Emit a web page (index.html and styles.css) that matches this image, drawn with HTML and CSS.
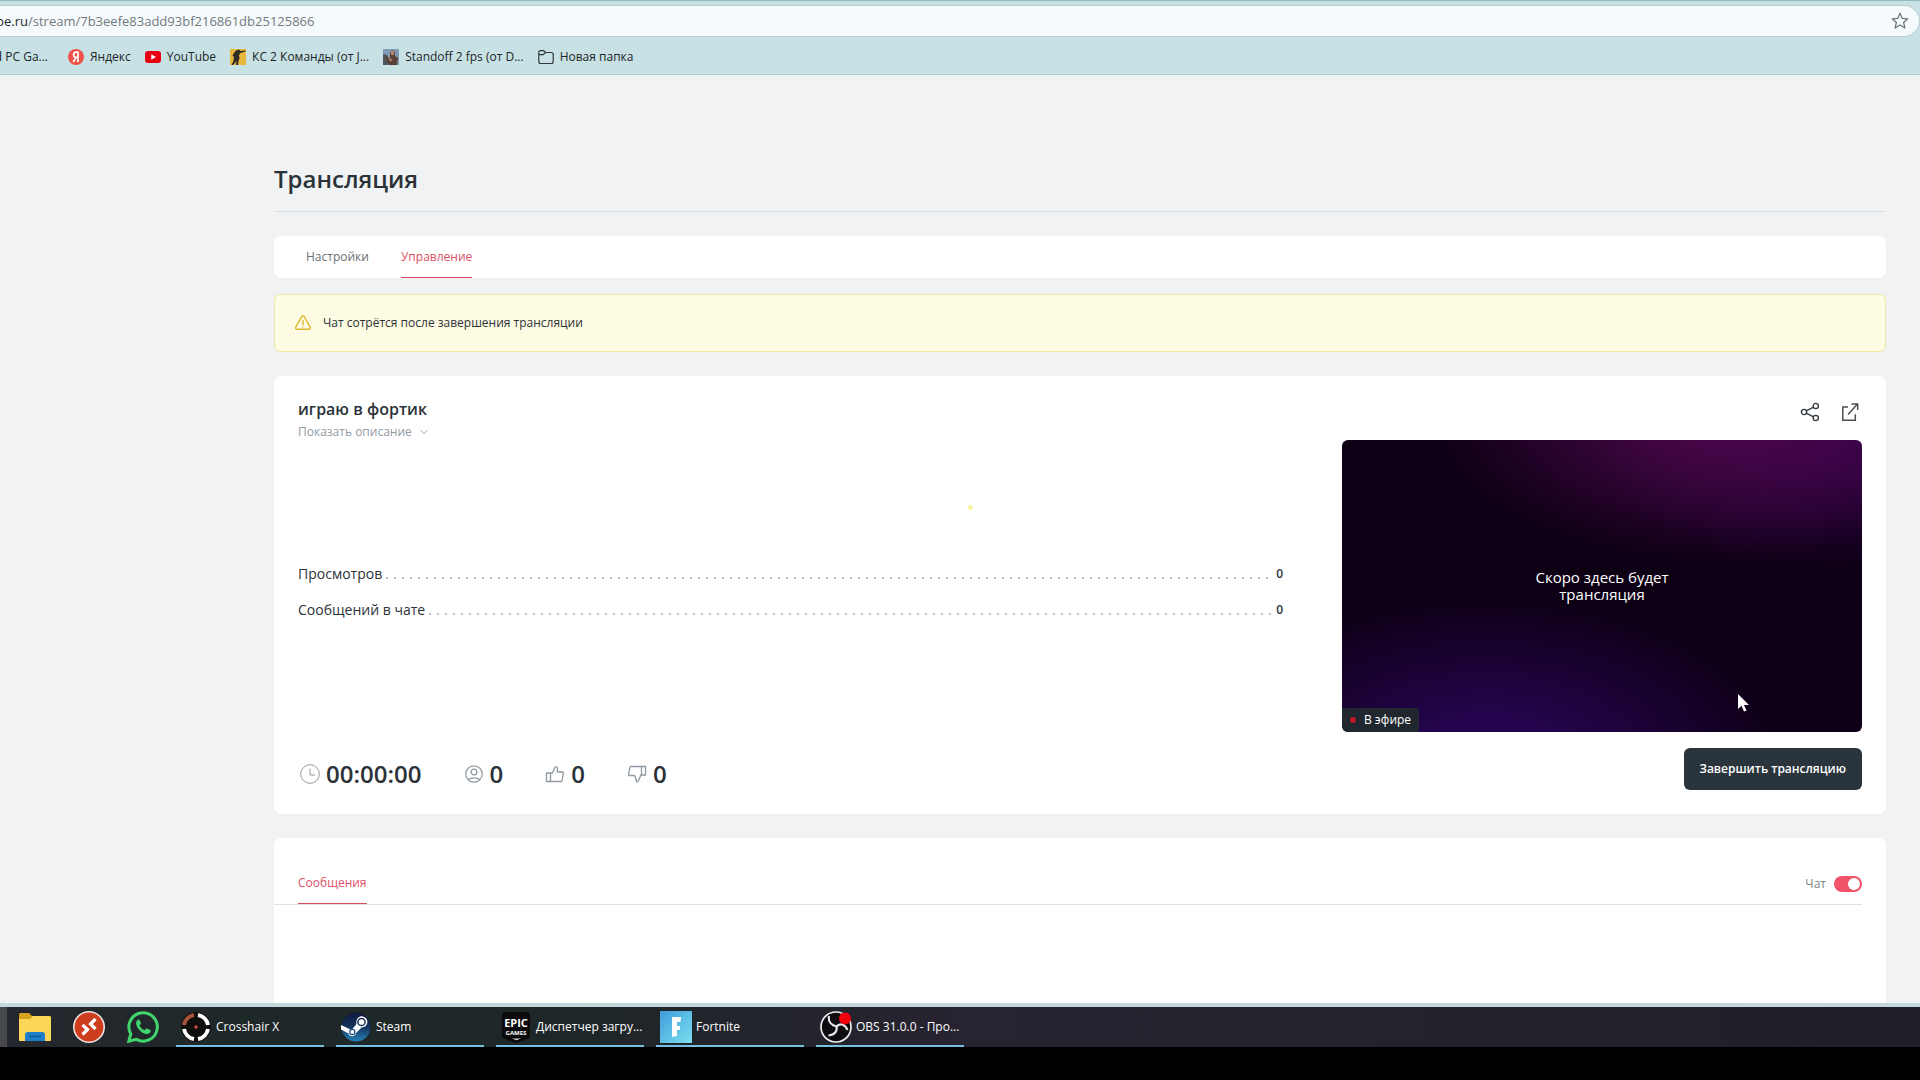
FILE: index.html
```html
<!DOCTYPE html>
<html lang="ru">
<head>
<meta charset="utf-8">
<title>Трансляция</title>
<link rel="stylesheet" href="styles.css">
</head>
<body>
<header class="browser">
  <div class="address">
    <label class="address-host" for="url">be.ru</label>
    <input class="address-input" id="url" type="text" value="/stream/7b3eefe83add93bf216861db25125866">
    <button class="icon-button star" aria-label="Добавить в закладки">
      <svg width="18" height="18" viewBox="0 0 18 18" fill="none" stroke="#687277" stroke-width="1.2" stroke-linejoin="round"><path d="M9 1.2l2.2 5.1 5.6.5-4.200 3.700 1.300 5.500L9 13.100 4.100 16l1.300-5.500L1.200 6.800l5.600-.5z"/></svg>
    </button>
  </div>
  <nav class="bookmarks">
    <a class="bookmark bookmark-cut" href="#">d PC Ga...</a>
    <a class="bookmark" href="#">
      <svg width="16" height="16" viewBox="0 0 16 16"><circle cx="8" cy="8" r="8" fill="#ee5148"/><path d="M10 13V3.200H8.300C6.500 3.200 5.600 4.300 5.600 5.700c0 1.500.8 2.500 2.400 2.600h2M8 8.400L5.400 13" fill="none" stroke="#fff" stroke-width="1.700"/></svg>
      <span>Яндекс</span></a>
    <a class="bookmark" href="#">
      <svg width="16" height="16" viewBox="0 0 16 16"><rect y="2" width="16" height="12" rx="3" fill="#e60012"/><path d="M6.300 5.300v5.400L11 8z" fill="#fff"/></svg>
      <span>YouTube</span></a>
    <a class="bookmark" href="#">
      <svg width="16" height="16" viewBox="0 0 16 16"><rect width="16" height="16" fill="#e5b83c"/><path d="M6 1.500l3-1 1.500 1.500 5-.5v1l-5 1.500-1.500 2 .5 3L8.500 12 8 16H6l.5-4.500L5 14l-2 2H1.500l2-4L4 8 2.500 6.500 4 4z" fill="#2e2c25"/></svg>
      <span>КС 2 Команды (от J...</span></a>
    <a class="bookmark" href="#">
      <svg width="16" height="16" viewBox="0 0 16 16"><rect width="16" height="16" fill="#7f9ab2"/><path d="M0 5l4 1 2 4-2 6H0z" fill="#4c5560"/><path d="M5 16L2 8l2-1 3 3V4l2-3 3 2v4l3 2-1 7z" fill="#5a4238"/><path d="M8 2h3v4H8zM5 9l4 1-1 3z" fill="#b08a75"/></svg>
      <span>Standoff 2 fps (от D...</span></a>
    <a class="bookmark" href="#">
      <svg width="16" height="16" viewBox="0 0 16 16" fill="none" stroke="#30383b" stroke-width="1.200"><path d="M.8 12.500v-9C.8 2.400 1.600 1.600 2.700 1.600h3l1.800 1.900h5.700c1.100 0 2 .9 2 2v7c0 1.100-.9 2-2 2H2.700c-1.100 0-1.900-.9-1.900-2zM.8 5.700h4.400l2.300-2.200"/></svg>
      <span>Новая папка</span></a>
  </nav>
</header>

<main class="page">
  <h1 class="page-title">Трансляция</h1>
  <nav class="tabs">
    <a class="tab" href="#">Настройки</a>
    <a class="tab tab-active" href="#">Управление</a>
  </nav>
  <div class="alert" role="alert">
    <svg width="18" height="18" viewBox="0 0 18 18" fill="none" stroke="#e0b62c" stroke-width="1.400" stroke-linejoin="round" stroke-linecap="round"><path d="M7.800 2.600c.5-.9 1.900-.9 2.400 0l6 10.600c.5.900-.1 2-1.200 2H3c-1.100 0-1.700-1.100-1.200-2zM9 6.500v4M9 12.600v.2"/></svg>
    <span>Чат сотрётся после завершения трансляции</span>
  </div>

  <section class="card stream">
    <div class="stream-head">
      <div>
        <h2 class="stream-title">играю в фортик</h2>
        <button class="more">Показать описание
          <svg width="8" height="6" viewBox="0 0 8 6" fill="none" stroke="#9aa5ae"><path d="M.5 1L4 4.500 7.500 1"/></svg>
        </button>
      </div>
      <div class="stream-actions">
        <button class="icon-button" aria-label="Поделиться">
          <svg width="20" height="20" viewBox="0 0 20 20" fill="none" stroke="#343c42" stroke-width="1.400"><circle cx="4" cy="10" r="2.600"/><circle cx="15.800" cy="4" r="2.600"/><circle cx="15.800" cy="16" r="2.600"/><path d="M6.300 8.800L13.500 5.200M6.300 11.200l7.200 3.600"/></svg>
        </button>
        <button class="icon-button" aria-label="Открыть в новом окне">
          <svg width="20" height="20" viewBox="0 0 20 20" fill="none" stroke="#4b5257" stroke-width="1.500"><path d="M8 5H2.800v13.200h12.500v-6M8 12.500L17.500 2M11.500 2H17.700v6"/></svg>
        </button>
      </div>
    </div>
    <div class="stream-body">
      <dl class="metrics">
        <div class="metric"><dt>Просмотров</dt><dd>0</dd></div>
        <div class="metric"><dt>Сообщений в чате</dt><dd>0</dd></div>
      </dl>
      <div class="player">
        <p class="player-text">Скоро здесь будет<br>трансляция</p>
        <span class="live">В эфире</span>
      </div>
    </div>
    <div class="stream-foot">
      <ul class="stats">
        <li class="stat">
          <svg width="20" height="20" viewBox="0 0 20 20" fill="none" stroke="#8e99a2"><circle cx="10" cy="10" r="9.300"/><path d="M10 4.500V11h5"/></svg>
          00:00:00</li>
        <li class="stat">
          <svg width="20" height="20" viewBox="0 0 20 20" fill="none" stroke="#8e99a2" stroke-width="1.200"><circle cx="11" cy="10" r="8.200"/><circle cx="11" cy="8" r="2.900"/><path d="M5.200 15.500c3-2.300 8.600-2.300 11.600 0"/></svg>
          0</li>
        <li class="stat">
          <svg width="20" height="20" viewBox="0 0 20 20" fill="none" stroke="#8e99a2" stroke-width="1.300" stroke-linejoin="round"><path d="M1.500 9h4v8.500h-4zM5.500 9h2L10 3c1.300-.6 2.500.2 2.400 1.500V8h5.200c.6 0 .9.400.8 1l-1.300 7.500c-.1.700-.5 1-1.100 1H5.500"/></svg>
          0</li>
        <li class="stat">
          <svg width="20" height="20" viewBox="0 0 20 20" fill="none" stroke="#8e99a2" stroke-width="1.300" stroke-linejoin="round"><path d="M18.500 2.500h-4V11h4zM14.500 2.500H4c-.6 0-1 .3-1.100 1L1.600 10.500c-.1.600.2 1 .8 1h4.900c.6 0 .7.400.8 1l1.600 5.200c1 .2 1.500-.4 1.900-1.200l2.300-5.500h.6"/></svg>
          0</li>
      </ul>
      <button class="finish">Завершить трансляцию</button>
    </div>
    <span class="spark"></span>
  </section>

  <section class="card chat">
    <div class="chat-head">
      <a class="tab tab-active" href="#">Сообщения</a>
      <label class="switch">Чат <input class="switch-input" type="checkbox" checked></label>
    </div>
  </section>
</main>

<footer class="taskbar">
  <button class="pin" aria-label="Проводник">
    <svg width="32" height="32" viewBox="0 0 32 32"><path d="M0 4c0-1.500.8-2 2-2h8l3 3h17c1.500 0 2 .8 2 2v21H0z" fill="#d9a21c"/><path d="M0 8h11l3-3h16c1.500 0 2 .8 2 2v22c0 .6-.4 1-1 1H1c-.6 0-1-.4-1-1z" fill="#fbd657"/><path d="M6 30v-6c0-2 1-3 3-3h14c2 0 3 1 3 3v6z" fill="#1d7fc9"/><path d="M10 25.500h12" stroke="#0e5c9d" stroke-width="1.500"/></svg>
  </button>
  <button class="pin" aria-label="Удалённый рабочий стол">
    <svg width="32" height="32" viewBox="0 0 32 32"><circle cx="16" cy="16" r="15.200" fill="#cf3d1f" stroke="#ece5e2" stroke-width="1.600"/><path d="M9.500 14l5 4.500-5 5M22.500 8l-5 5 5 5" fill="none" stroke="#fff" stroke-width="3.200"/></svg>
  </button>
  <button class="pin" aria-label="WhatsApp">
    <svg width="32" height="32" viewBox="0 0 32 32"><path d="M1.800 30.200l2-7.200A14.200 14.200 0 1 1 9.300 28.400z" fill="none" stroke="#42d46c" stroke-width="3"/><path d="M11.500 8.500c-2 .8-2.900 3-2.200 5.200 1.500 4.500 5 8 9.500 9.300 2.300.6 4.500-.8 4.900-2.900.1-.5 0-.8-.4-1l-3.300-1.600c-.4-.2-.8-.1-1 .2l-1.300 1.600c-2.400-1-4.200-2.800-5.200-4.900l1.300-1.600c.2-.3.300-.6.200-.9l-1.400-3c-.2-.4-.6-.6-1.100-.4z" fill="#42d46c"/></svg>
  </button>
  <button class="task">
    <svg width="32" height="32" viewBox="0 0 32 32"><circle cx="16" cy="16" r="15" fill="#100d0d"/><g fill="none" stroke-width="4"><path d="M18 4a12.300 12.300 0 0 1 10 10M28 18a12.300 12.300 0 0 1-10 10M14 28A12.300 12.300 0 0 1 4 18" stroke="#fff"/><path d="M4 14A12.300 12.300 0 0 1 14 4" stroke="#a8553b"/></g><circle cx="16" cy="16" r="1.800" fill="#c94a40"/></svg>
    <span>Crosshair X</span></button>
  <button class="task">
    <svg width="32" height="32" viewBox="0 0 32 32"><defs><linearGradient id="steam" x2="0" y2="1"><stop offset="0" stop-color="#11183f"/><stop offset=".5" stop-color="#14335c"/><stop offset="1" stop-color="#2583b8"/></linearGradient></defs><circle cx="16" cy="16" r="14.500" fill="url(#steam)"/><path d="M1 14l10.500 5L16.500 13c-1-5 3-8.500 6.500-7.500 7 2 5 11-1.500 11L16 22c-.5 4-6.500 4.500-7.500.500L1 18.500z" fill="#fff"/><circle cx="21.500" cy="11" r="3.600" fill="none" stroke="#1a3157" stroke-width="1.500"/><circle cx="12.300" cy="21" r="2.600" fill="none" stroke="#1a4a78" stroke-width="1.200"/></svg>
    <span>Steam</span></button>
  <button class="task">
    <svg class="epic" width="32" height="32" viewBox="0 0 32 32"><path d="M5 1h22c1.700 0 3 1 3 3v21c0 1.500-.5 2-2 2.800L16.500 32 4 27.800C2.500 27 2 26.500 2 25V4c0-2 1.300-3 3-3z" fill="#0a0a0b"/><path d="M12 27.500h9l-4.500 1.800z" fill="#ddd"/><text class="epic-name" x="16" y="16" text-anchor="middle">EPIC</text><text class="epic-games" x="16" y="24" text-anchor="middle">GAMES</text></svg>
    <span>Диспетчер загру...</span></button>
  <button class="task">
    <svg width="32" height="32" viewBox="0 0 32 32"><defs><linearGradient id="fort" x2="1" y2="1"><stop offset="0" stop-color="#3f9cdc"/><stop offset="1" stop-color="#7be0ee"/></linearGradient></defs><rect width="32" height="32" fill="url(#fort)"/><path d="M12 6h9l-.5 5H17v4h3v4h-3v6l-5 1z" fill="#fff"/></svg>
    <span>Fortnite</span></button>
  <button class="task">
    <svg width="32" height="32" viewBox="0 0 32 32"><circle cx="16" cy="16" r="15" fill="#0e0c10" stroke="#eee" stroke-width="1.700"/><path d="M9 5c-1 5 2 9 7.500 10.500M17 15c4-3 8-1.500 10.500 4M16.500 15c1 5-1.500 9-8 9.500" fill="none" stroke="#e9e9ec" stroke-width="2.200"/><circle cx="25" cy="7.500" r="6" fill="#f0000c"/></svg>
    <span>OBS 31.0.0 - Про...</span></button>
</footer>

<svg class="cursor" width="14" height="20" viewBox="0 0 14 20"><path d="M1 1v15l3.500-3.300L7 18.500l2.500-1-2.500-5.500h5z" fill="#fff"/></svg>
</body>
</html>
```
FILE: styles.css
```css
* {
  box-sizing: border-box;
}

body {
  margin: 0;
  height: 100vh;
  display: flex;
  flex-direction: column;
  overflow: hidden;
  position: relative;
  background: #000;
  color: #2b3238;
  font: 12px/16px "Open Sans", "Noto Sans", sans-serif;
}

h1, h2, p, dl, dd, ul {
  margin: 0;
  padding: 0;
}

a {
  color: inherit;
  text-decoration: none;
}

button {
  font: inherit;
  color: inherit;
  background: none;
  border: 0;
  padding: 0;
}

svg {
  flex: none;
  display: block;
}

.icon-button {
  display: flex;
}

/* Browser chrome */
.browser {
  flex: none;
  background: #c8e1e4;
  border-top: 1px solid #8fb9bc;
  border-bottom: 4px solid #edf4f5;
  padding-top: 4px;
}

.address {
  display: flex;
  align-items: center;
  height: 32px;
  background: #f5fafc;
  border: 1px solid #b9cfd2;
  border-left: 0;
  border-radius: 0 16px 16px 0;
  padding-right: 10px;
  font-size: 13px;
}

.address-host {
  width: 28px;
  display: flex;
  justify-content: flex-end;
  overflow: hidden;
  color: #23292b;
}

.address-input {
  flex: 1;
  border: 0;
  padding: 0;
  background: none;
  font: inherit;
  color: #73797c;
  outline: none;
}

.bookmarks {
  display: flex;
  align-items: center;
  gap: 14px;
  height: 38px;
  padding-top: 2px;
  border-bottom: 1px solid #b8cccf;
  color: #1c2527;
}

.bookmark {
  display: flex;
  align-items: center;
  gap: 6px;
  white-space: nowrap;
}

.bookmark-cut {
  width: 54px;
  padding-right: 6px;
  justify-content: flex-end;
  overflow: hidden;
}

/* Studio page */
.page {
  flex: 1;
  min-height: 0;
  display: flex;
  flex-direction: column;
  overflow: hidden;
  background: #f0f2f4;
  padding: 80px 34px 0 274px;
  border-bottom: 4px solid #c3d8dc;
}

.page-title {
  flex: none;
  height: 53px;
  margin-bottom: 24px;
  border-bottom: 1px solid #dcdfe2;
  font-size: 24px;
  line-height: 40px;
  font-weight: 600;
}

.tabs {
  flex: none;
  display: flex;
  gap: 32px;
  height: 42px;
  margin-bottom: 16px;
  padding: 0 32px;
  background: #fff;
  border-radius: 8px;
}

.tab {
  display: flex;
  align-items: center;
  border-bottom: 1px solid transparent;
  color: #6a7075;
}

.tab-active {
  color: #dc5068;
  border-color: #d64b60;
}

.alert {
  flex: none;
  display: flex;
  align-items: center;
  gap: 11px;
  height: 58px;
  margin-bottom: 24px;
  padding: 0 19px;
  background: #fefbe3;
  border: 1px solid #f2e6a4;
  border-radius: 6px;
}

.card {
  flex: none;
  background: #fff;
  border-radius: 8px;
}

.stream {
  position: relative;
  margin-bottom: 24px;
  padding: 24px;
}

.stream-head {
  display: flex;
  justify-content: space-between;
  height: 40px;
}

.stream-title {
  font-size: 16px;
  line-height: 18px;
  font-weight: 600;
}

.more {
  display: flex;
  align-items: center;
  gap: 8px;
  margin-top: 6px;
  color: #929ca5;
}

.stream-actions {
  display: flex;
  align-items: flex-start;
  gap: 20px;
  padding: 2px 2px 0 0;
}

.stream-body {
  display: grid;
  grid-template-columns: 985fr 520fr;
  gap: 59px;
}

.metrics {
  display: flex;
  flex-direction: column;
  justify-content: center;
  gap: 16px;
  padding-top: 12px;
}

.metric {
  display: flex;
  align-items: center;
  gap: 4px;
  font-size: 14px;
  line-height: 20px;
}

.metric::after {
  content: "";
  order: 1;
  flex: 1;
  height: 2px;
  margin-top: 8px;
  background: repeating-linear-gradient(90deg, #b9bec3 0 2px, transparent 2px 8px);
}

.metric dd {
  order: 2;
  font-size: 12px;
  font-weight: 600;
}

.player {
  position: relative;
  display: flex;
  align-items: center;
  justify-content: center;
  aspect-ratio: 520 / 292;
  border-radius: 6px;
  overflow: hidden;
  color: #fff;
  background:
    radial-gradient(ellipse 55% 50% at 72% -8%, #50084e, transparent),
    radial-gradient(ellipse 45% 42% at 95% 3%, #2d0045, transparent),
    radial-gradient(ellipse 58% 55% at 28% 108%, #2c055e, transparent),
    #0d0015;
}

.player-text {
  font-size: 15px;
  line-height: 17px;
  font-weight: 500;
  text-align: center;
}

.live {
  position: absolute;
  left: 0;
  bottom: 0;
  display: flex;
  align-items: center;
  gap: 8px;
  height: 24px;
  padding: 0 8px;
  background: #20272e;
  border-radius: 0 4px 0 0;
}

.live::before {
  content: "";
  width: 6px;
  height: 6px;
  border-radius: 50%;
  background: #c01528;
}

.stream-foot {
  display: flex;
  justify-content: space-between;
  height: 42px;
  margin-top: 16px;
}

.stats {
  display: flex;
  gap: 42px;
  height: 52px;
  padding-left: 2px;
  list-style: none;
  font-size: 24px;
  line-height: 32px;
  font-weight: 600;
}

.stat {
  display: flex;
  align-items: center;
  gap: 6px;
}

.finish {
  height: 42px;
  padding: 0 16px;
  border-radius: 6px;
  background: #29343c;
  color: #fff;
  font-weight: 600;
}

/* Click sparkle over the card */
.spark {
  position: absolute;
  left: 694px;
  top: 129px;
  width: 5px;
  height: 5px;
  border-radius: 50%;
  background: #fbf59a;
}

.chat {
  flex: 1;
  padding-top: 24px;
  border-radius: 8px 8px 0 0;
}

.chat-head {
  display: flex;
  justify-content: space-between;
  height: 43px;
  margin-right: 24px;
  padding-left: 24px;
  border-bottom: 1px solid #e0e3e6;
}

.switch {
  display: flex;
  align-items: center;
  gap: 8px;
  padding-top: 2px;
  color: #7d8489;
}

.switch-input {
  appearance: none;
  display: flex;
  justify-content: flex-end;
  width: 28px;
  height: 16px;
  margin: 0;
  padding: 2px;
  border-radius: 8px;
  background: #f0536a;
}

.switch-input::before {
  content: "";
  width: 12px;
  height: 12px;
  border-radius: 50%;
  background: #fff;
}

/* Windows taskbar */
.taskbar {
  flex: none;
  display: flex;
  height: 40px;
  margin-bottom: 33px;
  padding-left: 8px;
  background: linear-gradient(90deg, #25272e, #1f2829 12%, #1e2628 30%, #272330 50%, #221e29);
  box-shadow: inset 7px 0 #47484d;
  color: #fff;
}

.pin {
  display: grid;
  place-items: center;
  width: 54px;
}

.task {
  display: flex;
  align-items: center;
  gap: 4px;
  width: 148px;
  margin: 0 6px;
  padding: 2px 0 0 4px;
  border-bottom: 2px solid #75bfe0;
  white-space: nowrap;
}

.epic text {
  fill: #fff;
  font-family: "Open Sans", sans-serif;
  font-weight: 700;
}

.epic-name {
  font-size: 11px;
}

.epic-games {
  font-size: 6px;
}

.cursor {
  position: absolute;
  left: 1737px;
  top: 693px;
}
```
